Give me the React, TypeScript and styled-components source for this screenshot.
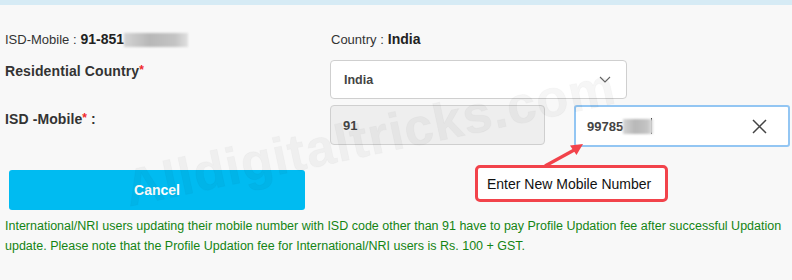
import React from "react";
import styled, { createGlobalStyle } from "styled-components";

const Global = createGlobalStyle`
  html, body { margin: 0; padding: 0; background: #f8f8f8; }
  body { font-family: "Liberation Sans", Arial, sans-serif; color: #333; }
`;

const Page = styled.div`
  position: relative;
  width: 792px;
  height: 280px;
  overflow: hidden;
  background: #f8f8f8;
`;

const TopStrip = styled.div`
  height: 5px;
  background: #d6ebf5;
`;

const Content = styled.div`
  padding: 26px 0 0 5px;
`;

const InfoRow = styled.div`
  display: grid;
  grid-template-columns: 326px 1fr;
  line-height: 17px;
  height: 17px;
`;

const InfoItem = styled.div`
  font-size: 13px;
  color: #333;
  display: flex;
  align-items: center;
  white-space: nowrap;
`;

const InfoValue = styled.b`
  font-size: 14px;
  color: #222;
  margin-left: 4px;
`;

const Blur = styled.span<{ $w: number; $h: number }>`
  display: inline-block;
  width: ${(p) => p.$w}px;
  height: ${(p) => p.$h}px;
  background: linear-gradient(90deg, #d4d4d4 0%, #b8b8b8 40%, #c4c4c4 80%, #e0e0e0 100%);
  filter: blur(1.2px);
`;

const FormGrid = styled.div`
  display: grid;
  grid-template-columns: 325px 215px 29px 216px;
  row-gap: 6px;
  margin-top: 12px;
`;

const Label = styled.div<{ $pt: number }>`
  font-size: 14px;
  font-weight: bold;
  line-height: 17px;
  color: #333;
  padding-top: ${(p) => p.$pt}px;
  letter-spacing: 0.1px;
`;

const Star = styled.span`
  color: #f0282a;
  font-size: 12px;
  vertical-align: 2px;
`;

const Select = styled.div`
  grid-column: 2 / span 3;
  width: 297px;
  height: 39px;
  box-sizing: border-box;
  border: 1px solid #cfcfcf;
  border-radius: 4px;
  background: #fff;
  display: flex;
  align-items: center;
  justify-content: space-between;
  padding: 0 15px 0 13px;
  font-size: 12.5px;
  font-weight: bold;
  color: #444;
`;

const Field = styled.div<{ $disabled?: boolean; $focus?: boolean }>`
  height: ${(p) => (p.$focus ? 42 : 40)}px;
  box-sizing: border-box;
  border: ${(p) => (p.$focus ? "2px solid #93c6f3" : "1px solid #cfcfcf")};
  border-radius: ${(p) => (p.$focus ? 3 : 4)}px;
  background: ${(p) => (p.$disabled ? "#eeeeee" : "#fff")};
  display: flex;
  align-items: center;
  padding: ${(p) => (p.$focus ? "0 21px 0 11px" : "0 12px")};
  font-size: 13px;
  font-weight: bold;
  color: #444;
`;

const MobileField = styled(Field)`
  grid-column: 4;
  justify-content: space-between;
`;

const Value = styled.span`
  display: flex;
  align-items: center;
`;

const Caret = styled.span`
  display: inline-block;
  width: 1px;
  height: 16px;
  background: #111;
  margin-left: -2px;
`;

const ButtonRow = styled.div`
  margin-top: 23px;
  padding-left: 4px;
`;

const CancelButton = styled.button`
  width: 296px;
  height: 40px;
  border: none;
  border-radius: 3px;
  background: #00bbf1;
  color: #fff;
  font-family: "Liberation Sans", Arial, sans-serif;
  font-size: 14px;
  font-weight: bold;
  cursor: pointer;
`;

const Note = styled.p`
  margin: 6px 0 0;
  font-size: 12.5px;
  line-height: 20px;
  color: #148414;
  white-space: nowrap;
`;

const Callout = styled.div`
  position: absolute;
  left: 475px;
  top: 165px;
  width: 193px;
  height: 37px;
  box-sizing: border-box;
  border: 3px solid #f2434b;
  border-radius: 5px;
  background: #fff;
  display: flex;
  align-items: center;
  padding-left: 9px;
  font-size: 14px;
  color: #111;
  white-space: nowrap;
`;

const ArrowSvg = styled.svg`
  position: absolute;
  left: 540px;
  top: 138px;
`;

const Watermark = styled.div`
  position: absolute;
  left: 370px;
  top: 137px;
  transform: translate(-50%, -50%) rotate(-12deg);
  font-size: 52px;
  font-weight: bold;
  color: rgba(0, 0, 0, 0.035);
  -webkit-text-stroke: 1px rgba(0, 0, 0, 0.025);
  white-space: nowrap;
  pointer-events: none;
  letter-spacing: 1px;
`;

export default function App() {
  return (
    <>
      <Global />
      <Page>
        <TopStrip />
        <Content>
          <InfoRow>
            <InfoItem>
              ISD-Mobile :<InfoValue>91-851</InfoValue>
              <Blur $w={64} $h={14} />
            </InfoItem>
            <InfoItem>
              Country :<InfoValue>India</InfoValue>
            </InfoItem>
          </InfoRow>
          <FormGrid>
            <Label $pt={2}>
              Residential Country<Star>*</Star>
            </Label>
            <Select>
              <span>India</span>
              <svg width="12" height="7" viewBox="0 0 12 7">
                <path d="M1 1l5 5 5-5" fill="none" stroke="#666" strokeWidth="1.1" />
              </svg>
            </Select>
            <Label $pt={5}>
              ISD -Mobile<Star>*</Star> :
            </Label>
            <Field $disabled>91</Field>
            <div />
            <MobileField $focus>
              <Value>
                99785
                <Blur $w={30} $h={15} />
                <Caret />
              </Value>
              <svg width="15" height="15" viewBox="0 0 15 15">
                <path d="M1 1l13 13M14 1L1 14" fill="none" stroke="#444" strokeWidth="1.5" />
              </svg>
            </MobileField>
          </FormGrid>
          <ButtonRow>
            <CancelButton>Cancel</CancelButton>
          </ButtonRow>
          <Note>
            International/NRI users updating their mobile number with ISD code other than 91 have to pay Profile Updation fee after successful Updation
            <br />
            update. Please note that the Profile Updation fee for International/NRI users is Rs. 100 + GST.
          </Note>
        </Content>
        <Watermark>Alldigitaltricks.com</Watermark>
        <ArrowSvg width="50" height="32" viewBox="0 0 50 32">
          <path d="M5 28L36 11" stroke="#f2434b" strokeWidth="3.2" fill="none" />
          <path d="M43 6L30 7.5L36.5 17Z" fill="#f2434b" />
        </ArrowSvg>
        <Callout>Enter New Mobile Number</Callout>
      </Page>
    </>
  );
}
